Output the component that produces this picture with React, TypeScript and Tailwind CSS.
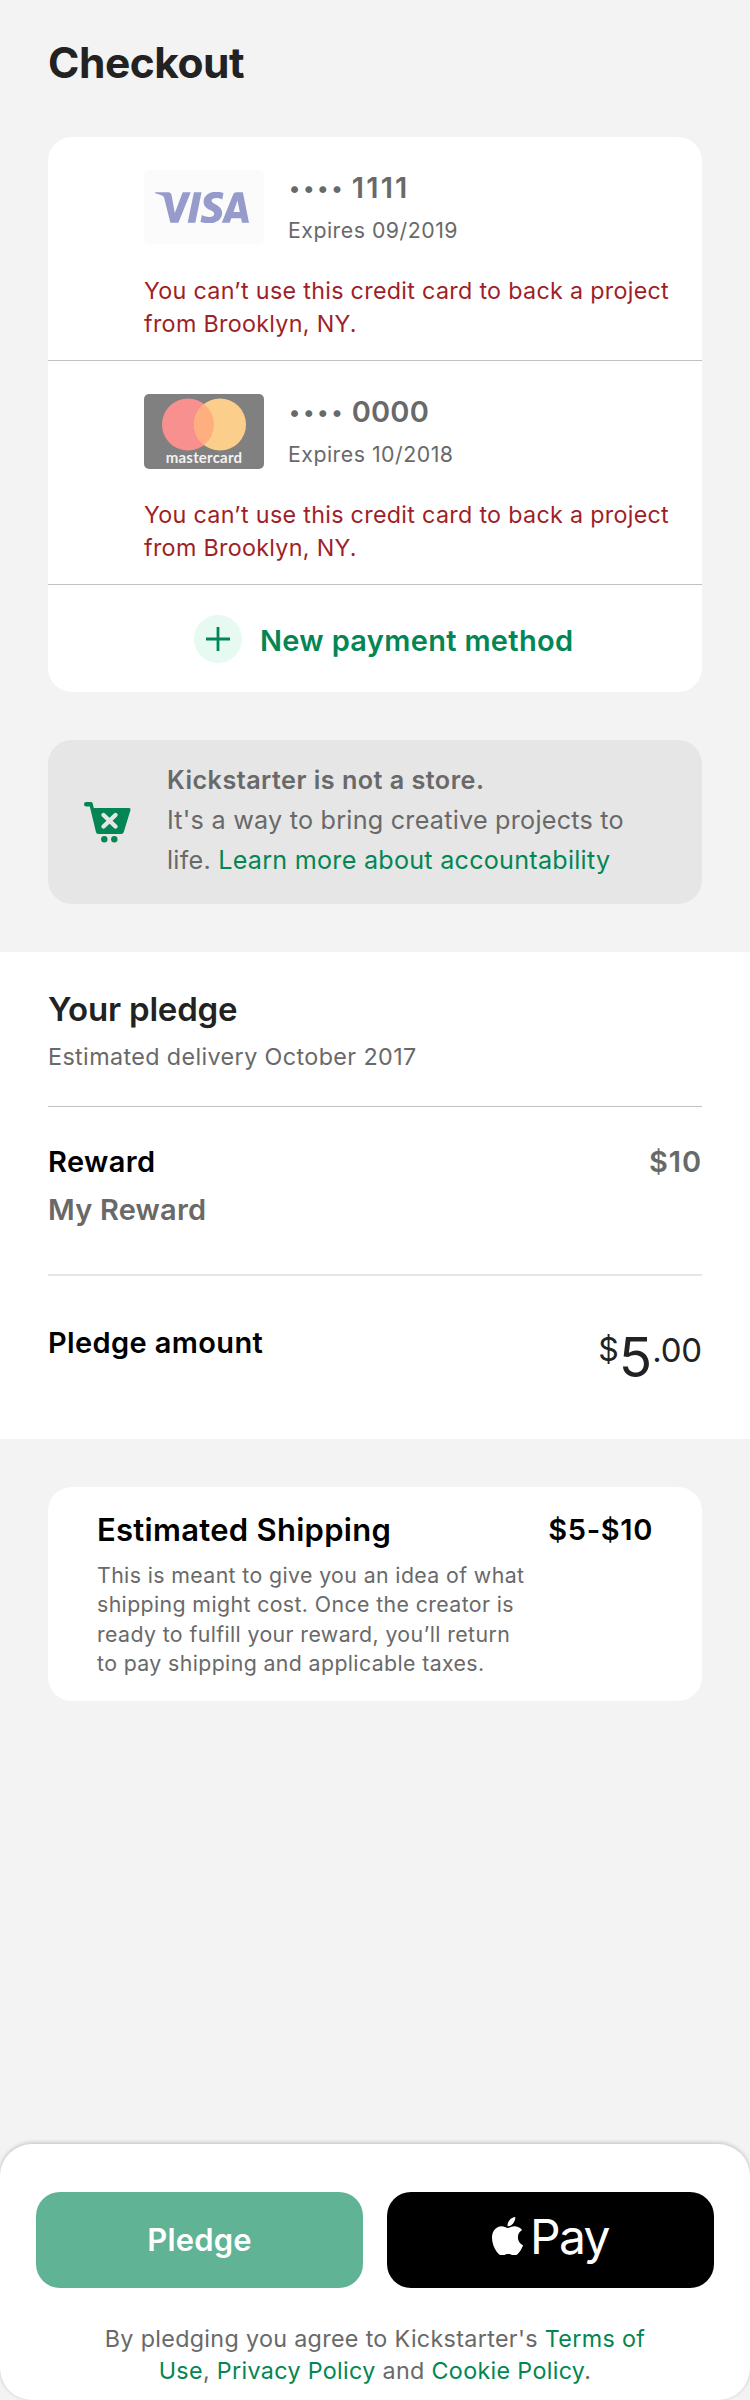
import React, { type ReactNode } from "react";
import { FaApple } from "react-icons/fa";

function VisaLogo() {
  return (
    <div className="flex h-[74px] w-[120px] shrink-0 items-center rounded-[5px] bg-[#fbfbfb] pl-[11px]">
      <svg viewBox="0 8.2 24 7.6" preserveAspectRatio="none" className="h-[31px] w-[94px]" fill="#969bcb">
        <path d="M9.112 8.262L5.97 15.758H3.92L2.374 9.775c-.094-.368-.175-.503-.461-.658C1.447 8.864.677 8.627 0 8.479l.046-.217h3.3a.904.904 0 01.894.764l.817 4.338 2.018-5.102zm8.033 5.049c.008-1.979-2.736-2.088-2.717-2.972.006-.269.262-.555.822-.628a3.66 3.66 0 011.913.336l.34-1.59a5.207 5.207 0 00-1.814-.333c-1.917 0-3.266 1.02-3.278 2.479-.012 1.079.963 1.68 1.698 2.04.756.367 1.01.603 1.006.931-.005.504-.602.725-1.16.734-.975.015-1.54-.263-1.992-.473l-.351 1.642c.453.208 1.289.39 2.156.398 2.037 0 3.37-1.006 3.377-2.564m5.061 2.447H24l-1.565-7.496h-1.656a.883.883 0 00-.826.55l-2.909 6.946h2.036l.405-1.12h2.488zm-2.163-2.656l1.02-2.815.588 2.815zm-8.16-4.84l-1.603 7.496H8.34l1.605-7.496z" />
      </svg>
    </div>
  );
}

function MastercardLogo() {
  return (
    <div className="flex h-[75px] w-[120px] shrink-0 flex-col items-center rounded-[5px] bg-[#808080] pt-[4px]">
      <svg viewBox="0 0 84 53" className="h-[53px] w-[84px]">
        <circle cx="26" cy="26.5" r="26" fill="#f7908e" />
        <circle cx="58" cy="26.5" r="26" fill="#fbce8c" />
        <path d="M42 6a26 26 0 0 1 0 41a26 26 0 0 1 0-41z" fill="#ffae80" />
      </svg>
      <div className="mt-[-2px] font-['Lato'] text-[15px] font-bold leading-[16px] tracking-[0.2px] text-[#f2f2f2]">
        mastercard
      </div>
    </div>
  );
}

function PaymentRow({ logo, digits, expires }: { logo: ReactNode; digits: ReactNode; expires: ReactNode }) {
  return (
    <div className="h-[224px] border-b border-[#c2c2c2] pl-24 pt-[33px]">
      <div className="flex h-[74px] gap-6">
        {logo}
        <div className="text-[#696969]">
          <div className="whitespace-nowrap pl-[1px] text-[29px] font-semibold leading-[35px]">
            <span className="align-[2px] text-[22px] leading-none tracking-[3.1px]">••••</span>
            <span className="ml-[6px]">{digits}</span>
          </div>
          <div className="mt-[11px] text-[21.3px] leading-[28px]">{expires}</div>
        </div>
      </div>
      <p className="mt-[31px] whitespace-nowrap text-[23.3px] leading-[32.5px] tracking-[0.3px] text-[#9f1f28]">
        You can’t use this credit card to back a project
        <br />
        from Brooklyn, NY.
      </p>
    </div>
  );
}

function CartIcon() {
  return (
    <svg viewBox="0 0 48 42" className="mt-[2px] h-[42px] w-[48px]">
      <path
        d="M2.200 0H7q1.400 0 1.700 1.400L9.800 6H45q2 0 1.500 2L39.700 30.200Q39.200 32 37.500 32H14.200Q12.400 32 12 30.200L5.800 4.400H2.200A2.200 2.200 0 0 1 2.200 0z"
        fill="#038654"
      />
      <path d="M19.500 13L31.500 24.500M31.500 13L19.500 24.500" stroke="#e6e6e6" strokeWidth="4.400" strokeLinecap="round" />
      <circle cx="20.300" cy="37.300" r="3.200" fill="#038654" />
      <circle cx="30.300" cy="37.300" r="3.200" fill="#038654" />
    </svg>
  );
}

export default function App() {
  return (
    <div className="flex h-[2400px] w-[750px] flex-col bg-[#f3f3f3] font-['Inter',sans-serif]">
      <h1 className="px-12 pt-[37px] text-[42.5px] font-bold leading-[52px] tracking-[-0.5px] text-[#222222]">
        Checkout
      </h1>

      <section className="mx-12 mt-12 overflow-hidden rounded-[24px] bg-white">
        <PaymentRow
          logo={<VisaLogo />}
          digits={<span className="tracking-[2.2px]">1111</span>}
          expires={<span className="tracking-[0.5px]">Expires 09/2019</span>}
        />
        <PaymentRow
          logo={<MastercardLogo />}
          digits={<span className="tracking-[0.2px]">0000</span>}
          expires={<span className="tracking-[0.5px]">Expires 10/2018</span>}
        />
        <div className="flex h-[107px] items-center gap-[18px] pl-[146px] text-[#038654]">
          <div className="flex size-12 items-center justify-center rounded-full bg-[#e6faf1]">
            <svg viewBox="0 0 24 24" className="size-6" stroke="currentColor" strokeWidth="2.800">
              <path d="M12 0v24M0 12h24" />
            </svg>
          </div>
          <div className="whitespace-nowrap pt-[4px] text-[29px] font-semibold leading-[36px] tracking-[0.32px]">
            New payment method
          </div>
        </div>
      </section>

      <section className="mx-12 mt-12 flex h-[164px] items-center rounded-[24px] bg-[#e6e6e6] pl-9">
        <CartIcon />
        <div className="mb-1 ml-[35px] whitespace-nowrap text-[25.2px] leading-[40px] text-[#696969]">
          <div className="font-semibold tracking-[0.46px]">Kickstarter is not a store.</div>
          <div className="tracking-[0.23px]">
            It's a way to bring creative projects to
            <br />
            life. <span className="text-[#038654]">Learn more about accountability</span>
          </div>
        </div>
      </section>

      <section className="mt-12 h-[487px] bg-white px-12 pt-[35px]">
        <h2 className="text-[33px] font-semibold leading-[44px] tracking-[-0.2px] text-[#222222]">Your pledge</h2>
        <p className="mt-[10px] text-[23.3px] leading-[32px] tracking-[0.4px] text-[#696969]">
          Estimated delivery October 2017
        </p>
        <hr className="mt-[33px] h-px border-0 bg-[#c2c2c2]" />
        <div className="mt-[31px] flex justify-between text-[29px] font-semibold leading-[48px]">
          <div>
            <div className="tracking-[0.4px] text-black">Reward</div>
            <div className="tracking-[0.2px] text-[#696969]">My Reward</div>
          </div>
          <div className="tracking-[0.9px] text-[#696969]">$10</div>
        </div>
        <hr className="mt-[40px] h-[2px] border-0 bg-[#e6e6e6]" />
        <div className="mt-[43px] flex items-start justify-between">
          <div className="text-[29px] font-semibold leading-[48px] tracking-[0.37px] text-black">Pledge amount</div>
          <div className="flex items-start text-[#222222]">
            <span className="mt-[11px] text-[32px] leading-[40px]">$</span>
            <span className="mt-[8px] text-[55px] leading-[60px]">5</span>
            <span className="mt-[11px] text-[33px] leading-[40px] tracking-[-0.2px]">.00</span>
          </div>
        </div>
      </section>

      <section className="mx-12 mt-12 h-[214px] rounded-[24px] bg-white px-[49px] pt-[23px]">
        <div className="flex justify-between whitespace-nowrap font-semibold leading-[40px] text-black">
          <h3 className="text-[31px] tracking-[0.28px]">Estimated Shipping</h3>
          <div className="text-[29px] tracking-[0.65px]">$5-$10</div>
        </div>
        <p className="mt-[11px] whitespace-nowrap text-[21.3px] leading-[29.33px] tracking-[0.39px] text-[#696969]">
          This is meant to give you an idea of what
          <br />
          shipping might cost. Once the creator is
          <br />
          ready to fulfill your reward, you’ll return
          <br />
          to pay shipping and applicable taxes.
        </p>
      </section>

      <footer className="mt-auto h-[256px] rounded-[32px] bg-white px-9 pt-12 shadow-[0_-1px_4px_rgba(0,0,0,0.22)]">
        <div className="flex gap-6">
          <button className="h-24 flex-1 rounded-[24px] bg-[#60b395] text-[31px] font-semibold tracking-[0.16px] text-white">
            Pledge
          </button>
          <button className="flex h-24 flex-1 items-center justify-center rounded-[24px] bg-black text-white">
            <FaApple viewBox="4 32 376 448" preserveAspectRatio="none" className="mb-[8px] h-[38.500px] w-[31px]" />
            <span className="mb-[6px] ml-[7px] text-[48px] leading-[58px] tracking-[-1.7px]">Pay</span>
          </button>
        </div>
        <p className="mt-[35px] whitespace-nowrap text-center text-[23.3px] leading-[32px] tracking-[0.33px] text-[#696969]">
          By pledging you agree to Kickstarter's <span className="text-[#038654]">Terms of</span>
          <br />
          <span className="text-[#038654]">Use</span>, <span className="text-[#038654]">Privacy Policy</span> and{" "}
          <span className="text-[#038654]">Cookie Policy</span>.
        </p>
      </footer>
    </div>
  );
}
